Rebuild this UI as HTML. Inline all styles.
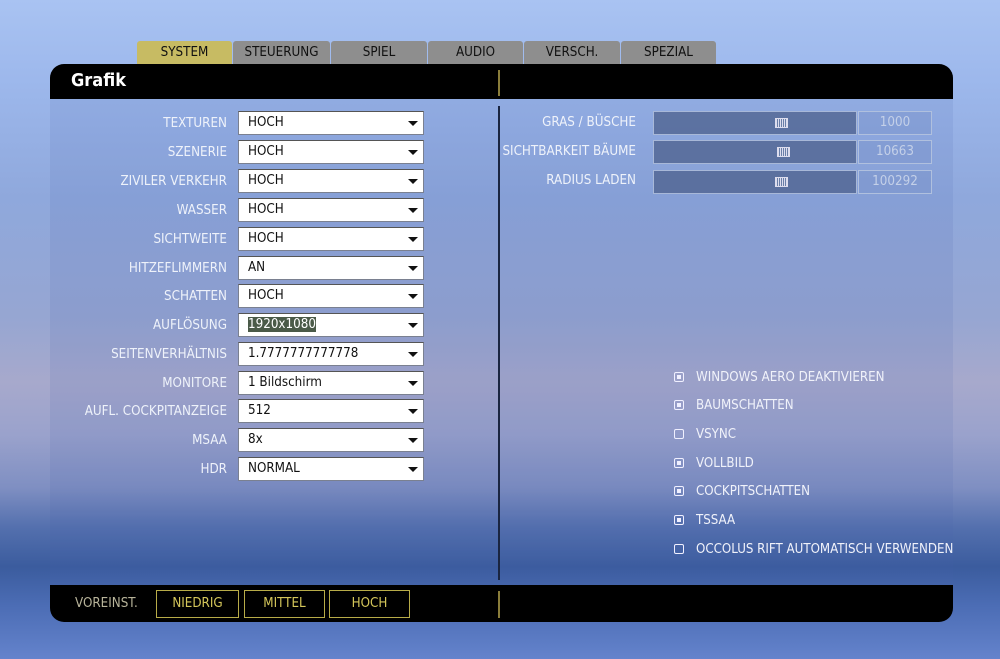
<!DOCTYPE html>
<html><head><meta charset="utf-8"><style>
*{margin:0;padding:0;box-sizing:border-box}
body{width:1000px;height:659px;overflow:hidden;position:relative;font-family:"DejaVu Sans Condensed","DejaVu Sans","Liberation Sans",sans-serif;font-stretch:condensed;
background:linear-gradient(180deg,#a9c3f2 0%,#9db8ec 12%,#8fa8dc 30%,#96a6d2 48%,#a7a9cc 58%,#9aa2cc 66%,#7f8fc2 74%,#5470ae 80%,#3b5c9e 86%,#4c6db5 92%,#6483cc 100%)}
.a{position:absolute}
.tab{position:absolute;top:41px;height:23px;background:#8e8e8e;color:#111;font-size:13.3px;text-align:center;line-height:23px;border-radius:3px 3px 0 0}
.panel{left:50px;top:64px;width:903px;height:558px;border-radius:14px;overflow:hidden;background:rgba(70,100,170,0.12)}
.lbl{position:absolute;right:773px;color:#eef2fa;font-size:13.3px;text-align:right;white-space:nowrap}
.dd{position:absolute;left:238px;width:186px;height:24px;background:#fff;border:1px solid #7a8090;border-top-color:#555;color:#111;font-size:13.3px;line-height:22px;padding-left:9px}
.dd:after{content:"";position:absolute;right:5px;top:9px;border-left:5px solid transparent;border-right:5px solid transparent;border-top:5px solid #111}
.sl{position:absolute;left:653px;width:204px;height:24px;background:rgba(80,100,145,0.8);border:1px solid #a8b8d8}
.sl i{position:absolute;top:6px;width:13px;height:10px;border:1px solid #dde;background:repeating-linear-gradient(90deg,#dde 0 1px,#6a7fa8 1px 2px)}
.vb{position:absolute;left:858px;width:74px;height:24px;border:1px solid #b0c0de;background:rgba(120,145,200,0.4);color:#c4d0e8;font-size:13.3px;text-align:center;line-height:22px}
.rl{position:absolute;right:364px;color:#eef2fa;font-size:13.3px;white-space:nowrap;text-align:right}
.cb{position:absolute;left:674px;width:10px;height:10px;border:1px solid #f0f0ff;border-radius:2px}
.cb.on:after{content:"";position:absolute;left:2px;top:2px;width:4px;height:4px;background:#f0f0ff}
.ct{position:absolute;left:696px;color:#f0f2fa;font-size:13.2px;white-space:nowrap}
.btn{position:absolute;top:590px;height:28px;border:1px solid #b8ac48;color:#d4c65a;font-size:13.3px;text-align:center;line-height:26px}
</style></head><body>
<div class="tab" style="left:137px;width:95px;background:#c7bb63">SYSTEM</div>
<div class="tab" style="left:233px;width:97px">STEUERUNG</div>
<div class="tab" style="left:331px;width:96px">SPIEL</div>
<div class="tab" style="left:428px;width:95px">AUDIO</div>
<div class="tab" style="left:524px;width:96px">VERSCH.</div>
<div class="tab" style="left:621px;width:95px">SPEZIAL</div>
<div class="a panel">
 <div class="a" style="left:0;top:0;width:903px;height:35px;background:#000"></div>
 <div class="a" style="left:21px;top:6px;color:#fff;font-weight:bold;font-size:18px;font-family:'DejaVu Sans',sans-serif">Grafik</div>
 <div class="a" style="left:448px;top:6px;width:2px;height:26px;background:#8a7d3a"></div>
 <div class="a" style="left:448px;top:42px;width:2px;height:474px;background:#1a2540"></div>
 <div class="a" style="left:0;top:521px;width:903px;height:37px;background:#000"></div>
 <div class="a" style="left:448px;top:527px;width:2px;height:27px;background:#8a7d3a"></div>
</div>
<div class="lbl" style="top:116px">TEXTUREN</div><div class="dd" style="top:111px">HOCH</div>
<div class="lbl" style="top:145px">SZENERIE</div><div class="dd" style="top:140px">HOCH</div>
<div class="lbl" style="top:174px">ZIVILER VERKEHR</div><div class="dd" style="top:169px">HOCH</div>
<div class="lbl" style="top:203px">WASSER</div><div class="dd" style="top:198px">HOCH</div>
<div class="lbl" style="top:232px">SICHTWEITE</div><div class="dd" style="top:227px">HOCH</div>
<div class="lbl" style="top:261px">HITZEFLIMMERN</div><div class="dd" style="top:256px">AN</div>
<div class="lbl" style="top:289px">SCHATTEN</div><div class="dd" style="top:284px">HOCH</div>
<div class="lbl" style="top:318px">AUFLÖSUNG</div><div class="dd" style="top:313px"><span style="background:#4a5a48;color:#fff">1920x1080</span></div>
<div class="lbl" style="top:347px">SEITENVERHÄLTNIS</div><div class="dd" style="top:342px">1.7777777777778</div>
<div class="lbl" style="top:376px">MONITORE</div><div class="dd" style="top:371px">1 Bildschirm</div>
<div class="lbl" style="top:404px">AUFL. COCKPITANZEIGE</div><div class="dd" style="top:399px">512</div>
<div class="lbl" style="top:433px">MSAA</div><div class="dd" style="top:428px">8x</div>
<div class="lbl" style="top:462px">HDR</div><div class="dd" style="top:457px">NORMAL</div>

<div class="rl" style="top:115px">GRAS / BÜSCHE</div><div class="sl" style="top:111px"><i style="left:121px"></i></div><div class="vb" style="top:111px">1000</div>
<div class="rl" style="top:144px">SICHTBARKEIT BÄUME</div><div class="sl" style="top:140px"><i style="left:123px"></i></div><div class="vb" style="top:140px">10663</div>
<div class="rl" style="top:173px">RADIUS LADEN</div><div class="sl" style="top:170px"><i style="left:121px"></i></div><div class="vb" style="top:170px">100292</div>

<div class="cb on" style="top:372px"></div><div class="ct" style="top:370px">WINDOWS AERO DEAKTIVIEREN</div>
<div class="cb on" style="top:400px"></div><div class="ct" style="top:398px">BAUMSCHATTEN</div>
<div class="cb" style="top:429px"></div><div class="ct" style="top:427px">VSYNC</div>
<div class="cb on" style="top:458px"></div><div class="ct" style="top:456px">VOLLBILD</div>
<div class="cb on" style="top:486px"></div><div class="ct" style="top:484px">COCKPITSCHATTEN</div>
<div class="cb on" style="top:515px"></div><div class="ct" style="top:513px">TSSAA</div>
<div class="cb" style="top:544px"></div><div class="ct" style="top:542px">OCCOLUS RIFT AUTOMATISCH VERWENDEN</div>

<div class="a" style="left:75px;top:596px;color:#b8b49a;font-size:13.3px">VOREINST.</div>
<div class="btn" style="left:156px;width:83px">NIEDRIG</div>
<div class="btn" style="left:244px;width:81px">MITTEL</div>
<div class="btn" style="left:329px;width:81px">HOCH</div>
</body></html>
